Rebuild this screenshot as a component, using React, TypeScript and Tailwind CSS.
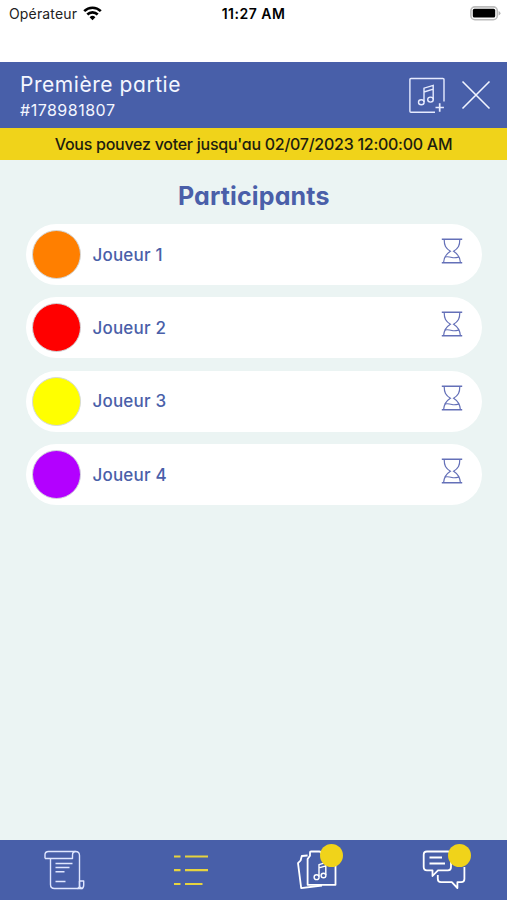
import React from "react";

interface Player {
  name: string;
  color: string;
}

const players: Player[] = [
  { name: "Joueur 1", color: "bg-[#ff7f00]" },
  { name: "Joueur 2", color: "bg-[#ff0000]" },
  { name: "Joueur 3", color: "bg-[#ffff00]" },
  { name: "Joueur 4", color: "bg-[#b300ff]" },
];

const StatusBar = () => (
  <div className="grid h-[62px] grid-cols-3 items-start bg-white pt-[4px] leading-5 text-[#222] [font-feature-settings:normal]">
    <div className="flex items-center gap-[6px] pl-[9px]">
      <span className="text-[14px] tracking-[0.15px]">Opérateur</span>
      <svg className="-mt-[2px]" width="19" height="15" viewBox="0 0 19 15" fill="none" stroke="#000" strokeWidth="2.6">
        <path d="M1.2 5.2a11.8 11.8 0 0 1 16.6 0M4.3 8.5a7.4 7.4 0 0 1 10.4 0" />
        <path d="M9.5 14.2 6.6 11.2a4.1 4.1 0 0 1 5.8 0Z" fill="#000" stroke="none" />
      </svg>
    </div>
    <span className="text-center text-[14px] font-semibold tracking-[0.5px] text-black">11:27 AM</span>
    <div className="flex justify-end pt-[2px] pr-[6px]">
      <svg width="31" height="15" viewBox="0 0 31 15">
        <rect x="0.9" y="0.9" width="26.4" height="12.8" rx="4" fill="#fff" stroke="#bcbcbc" strokeWidth="1.6" />
        <rect x="2.8" y="2.8" width="22.4" height="8.8" rx="1.6" fill="#000" />
        <path d="M28.6 5v4.4q1.9-.7 1.9-2.2T28.6 5Z" fill="#b5b5b5" />
      </svg>
    </div>
  </div>
);

const AddMusicIcon = () => (
  <svg width="37" height="37" viewBox="0 0 37 37" fill="none" stroke="#e6ebff" strokeWidth="1.4">
    <path d="M36 24.5V2.6Q36 1.5 34.9 1.5H3Q1.9 1.5 1.9 2.6v31.6q0 1.1 1.1 1.1h24" />
    <path d="M31.7 26.3v8.4M27.5 30.5h8.4" strokeWidth="1.7" />
    <path d="M16 25V11.2l9.2-2.8v14.1M16 15l9.2-2.8" />
    <ellipse cx="13.3" cy="25.2" rx="2.8" ry="2.5" />
    <ellipse cx="22.5" cy="22.6" rx="2.8" ry="2.5" />
  </svg>
);

const CloseIcon = () => (
  <svg width="30" height="30" viewBox="0 0 30 30" fill="none" stroke="#f1f4ff" strokeWidth="1.6">
    <path d="m1.5 1.5 27 27M28.5 1.5l-27 27" />
  </svg>
);

const HourglassIcon = () => (
  <svg width="22" height="28" viewBox="0 0 22 28" fill="none" stroke="#6470b8" strokeWidth="1.2">
    <path d="M.8 2.2h20.4M.8 25.8h20.4" strokeWidth="1.4" />
    <path d="M3.2 2.5c0 6 1.4 8.6 6.2 11.7C4.6 17.2 3 20 2.6 25.5M18.8 2.5c0 6-1.4 8.6-6.2 11.7 4.8 3 6.4 5.8 6.8 11.3" />
    <path d="M3.8 20c2.6-.6 4.4-.3 7.2.5 2.6.7 4.6.1 7.2-.5" />
  </svg>
);

const ScrollIcon = () => (
  <svg width="42" height="42" viewBox="0 0 42 42" fill="none" stroke="#dfe6ff" strokeWidth="1.4" strokeLinejoin="round">
    <path d="M2 9.5V5.8Q2 2.5 5.5 2.5h27q4 0 4 4v29q0 4 3 4H11.5q-4 0-4-4v-26" />
    <path d="M2 9.5h27.5v-3.3q0-3.7 3-3.7M36.5 32h4.2v4.2q0 3.3-3 3.3M36.5 32v4q0 3.5-2 3.5" />
    <path d="M12.5 14.5h17M12.5 18.5h14M12.5 22.7h9M12.5 32.5h10" />
  </svg>
);

const ListIcon = () => (
  <svg width="36" height="34" viewBox="0 0 36 34" fill="none" stroke="#e6d33f" strokeWidth="2.2">
    <path d="M1 3.5h6.5M12 3.5h23M1 17.2h6.5M12 17.2h23M1 31h6.5M12 31h17.5" />
  </svg>
);

const CardsIcon = () => (
  <svg width="42" height="42" viewBox="0 0 42 42" fill="none" stroke="#fff" strokeWidth="1.8" strokeLinejoin="round">
    <path d="M11.6 35.8V10l2.4-3.2V3.5q0-1 1-1h8.5q1 0 1.2 1l3 4H39.5v28.3Z" />
    <path d="M11.6 6.5 5.8 7 4.6 11.5 2 14.2 5.2 39.2 26 36.5" />
    <g strokeWidth="1.4">
      <path d="M23 27.5V15.6l6.8-2V26M23 18.8l6.8-2" />
      <ellipse cx="20.6" cy="28.2" rx="2.5" ry="2.4" />
      <ellipse cx="27.5" cy="26.5" rx="2.4" ry="2.3" />
    </g>
  </svg>
);

const ChatIcon = () => (
  <svg width="44" height="42" viewBox="0 0 44 42" fill="none" stroke="#fff" strokeWidth="1.8" strokeLinejoin="round">
    <path d="M5 2.5h21q3 0 3 3V18q0 3.3-3 3.3H16L10.5 27v-5.7H5q-3.3 0-3.3-3.3V5.8q0-3.3 3.3-3.3Z" />
    <path d="M7.5 8.5H20M7.5 14.5h15.5" />
    <path d="M15.8 26v4q0 3.2 3.2 3.2h10.8l5.6 5.8v-5.8h3.8q3.2 0 3.2-3.2V18" />
  </svg>
);

const Badge = () => (
  <span className="absolute top-[-5px] right-[-5px] size-[23px] rounded-full bg-[#f0d31a]" />
);

const Header = () => (
  <header className="flex h-[66px] items-center justify-between bg-[#485fa9] pr-[16px] pl-[20px] text-[#f4f6ff]">
    <div className="pt-[2px]">
      <h1 className="text-[21px] leading-[27px] tracking-[0.55px]">Première partie</h1>
      <p className="text-[16px] leading-[24px] tracking-[0.5px]">#178981807</p>
    </div>
    <div className="flex items-center gap-[16px]">
      <AddMusicIcon />
      <CloseIcon />
    </div>
  </header>
);

const PlayerRow = ({ player }: { player: Player }) => (
  <li className="flex h-[61px] items-center rounded-full bg-white pr-[19px] pl-[6px]">
    <span className={`size-[49px] shrink-0 rounded-full border border-[#d3d8dc] ${player.color}`} />
    <span className="ml-[12px] flex-1 pt-[2px] text-[17px] font-medium tracking-[0.2px] text-[#4a5fa9]">
      {player.name}
    </span>
    <span className="mb-[7px]">
      <HourglassIcon />
    </span>
  </li>
);

export default function App() {
  return (
    <div className="flex h-[900px] w-[507px] flex-col overflow-hidden bg-[#ebf4f3] font-['Inter',sans-serif] [font-feature-settings:'cv11']">
      <StatusBar />
      <Header />
      <div className="h-[32px] bg-[#f0d31a] text-center text-[16px] leading-[33px] font-medium tracking-[-0.26px] text-[#1d1d10]">
        Vous pouvez voter jusqu'au 02/07/2023 12:00:00 AM
      </div>

      <main className="flex-1 pr-[25px] pl-[25.5px]">
        <h2 className="pt-[18px] text-center text-[25px] leading-[36px] font-bold tracking-[0.15px] text-[#4a5fa9]">
          Participants
        </h2>
        <ul className="mt-[10px] flex flex-col gap-[12.3px]">
          {players.map((player) => (
            <PlayerRow key={player.name} player={player} />
          ))}
        </ul>
      </main>

      <nav className="grid h-[60px] grid-cols-4 place-items-center bg-[#485fa9] pl-[1px]">
        <ScrollIcon />
        <ListIcon />
        <div className="relative">
          <CardsIcon />
          <Badge />
        </div>
        <div className="relative">
          <ChatIcon />
          <Badge />
        </div>
      </nav>
    </div>
  );
}
